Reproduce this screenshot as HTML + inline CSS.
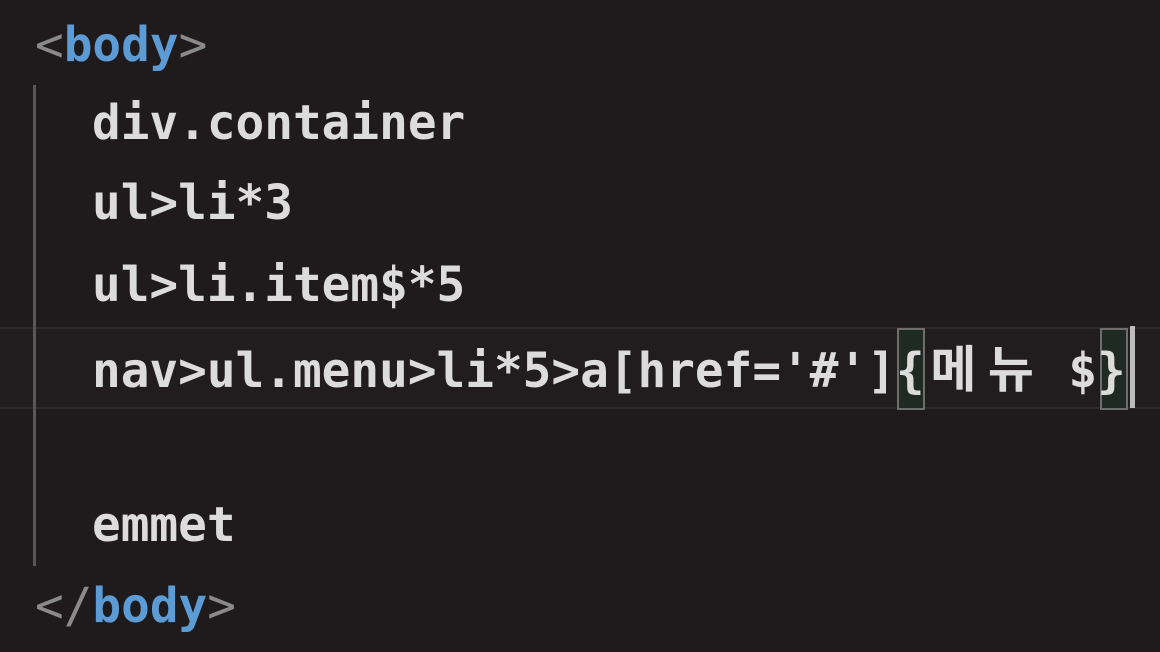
<!DOCTYPE html>
<html><head><meta charset="utf-8"><style>
html,body{margin:0;padding:0}
body{width:1160px;height:652px;background:#1f1b1c;overflow:hidden;position:relative;font-family:"DejaVu Sans Mono","Liberation Mono","Noto Sans CJK KR",monospace;font-size:47.7px;color:#dcdcdc;font-weight:bold}
.l{position:absolute;left:92px;height:81px;line-height:81px;white-space:pre}
.t{color:#8a8a8a;font-weight:normal}
.b{color:#5d9bd4}
.k{display:inline-block;width:57.5px;text-align:center;font-family:"Noto Sans CJK KR","NanumGothic",sans-serif;font-weight:bold;font-size:50px}
.hl{position:absolute;left:0;width:1160px;top:327px;height:78px;border-top:2px solid #2d292a;border-bottom:2px solid #2d292a;background:#211d1e}
.guide{position:absolute;left:33px;top:85px;width:3px;height:481px;background:#5a5657}
.box{position:absolute;top:328px;height:78px;width:24px;border:2px solid #6e6e6e;background:#1f2a24}
.cur{position:absolute;left:1130px;top:326px;width:5px;height:82px;background:#bdbdbd}
</style></head><body>
<div class="hl"></div>
<div class="guide"></div>
<div class="box" style="left:897px"></div>
<div class="box" style="left:1100px"></div>
<div class="cur"></div>
<div class="l" style="left:35px;top:5px"><span class="t">&lt;</span><span class="b">body</span><span class="t">&gt;</span></div>
<div class="l" style="top:83px">div.container</div>
<div class="l" style="top:163px">ul&gt;li*3</div>
<div class="l" style="top:245px">ul&gt;li.item$*5</div>
<div class="l" style="top:326px">nav&gt;ul.menu&gt;li*5&gt;a[href='#']{<span class="k">메</span><span class="k">뉴</span> $}</div>
<div class="l" style="top:485px">emmet</div>
<div class="l" style="left:35px;top:566px"><span class="t">&lt;/</span><span class="b">body</span><span class="t">&gt;</span></div>
</body></html>
